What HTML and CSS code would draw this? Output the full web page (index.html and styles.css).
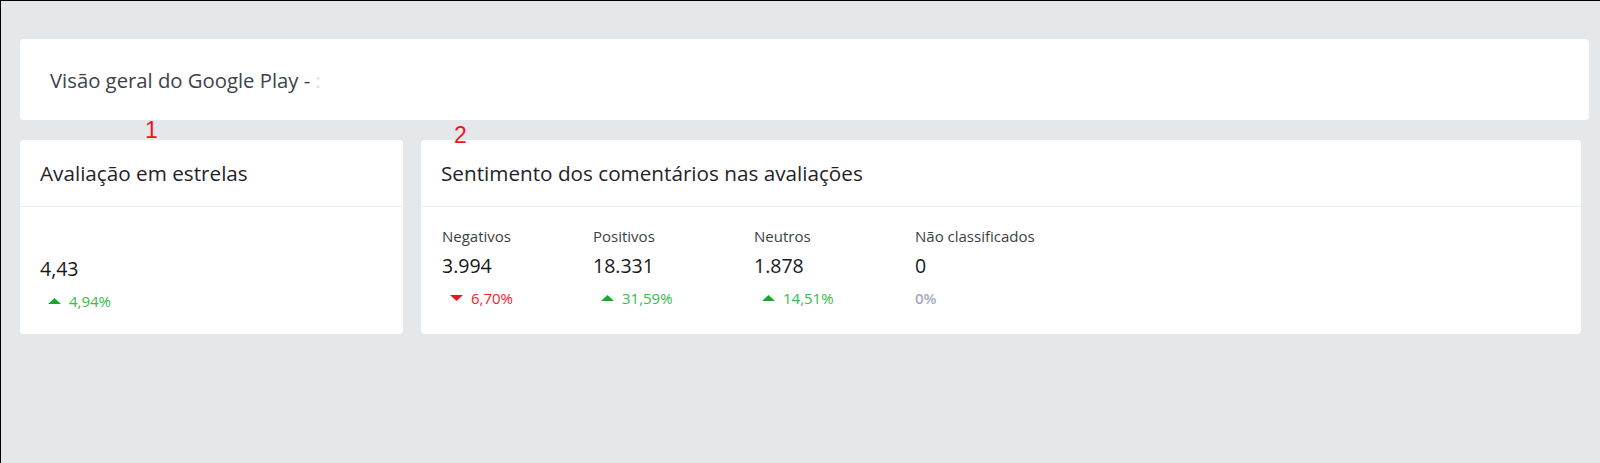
FILE: index.html
```html
<!DOCTYPE html>
<html lang="pt-BR">
<head>
    <meta charset="UTF-8">
    <meta name="viewport" content="width=device-width, initial-scale=1.0">
    <title>Visão geral do Google Play</title>
    <link rel="stylesheet" href="styles.css">
</head>
<body>

    <div class="page">
        <div class="overview">
            <h1>Visão geral do Google Play - <span class="app-name">:</span></h1>
        </div>

        <div class="cards">
            <span class="marker marker-1">1</span>
            <span class="marker marker-2">2</span>

            <div class="card card-stars">
                <div class="card-header">
                    <h2>Avaliação em estrelas</h2>
                </div>
                <div class="card-body stars-body">
                    <div class="metric">
                        <div class="metric-value">4,43</div>
                        <div class="metric-change up">
                            <svg class="arrow" width="13" height="6" viewBox="0 0 13 6"><polygon points="0,6 13,6 6.5,0"/></svg>
                            4,94%
                        </div>
                    </div>
                </div>
            </div>

            <div class="card card-sentiment">
                <div class="card-header">
                    <h2>Sentimento dos comentários nas avaliações</h2>
                </div>
                <div class="card-body sentiment-body">
                    <div class="metric col-neg">
                        <div class="metric-label">Negativos</div>
                        <div class="metric-value">3.994</div>
                        <div class="metric-change down">
                            <svg class="arrow" width="13" height="6" viewBox="0 0 13 6"><polygon points="0,0 13,0 6.5,6"/></svg>
                            6,70%
                        </div>
                    </div>
                    <div class="metric col-pos">
                        <div class="metric-label">Positivos</div>
                        <div class="metric-value">18.331</div>
                        <div class="metric-change up">
                            <svg class="arrow" width="13" height="6" viewBox="0 0 13 6"><polygon points="0,6 13,6 6.5,0"/></svg>
                            31,59%
                        </div>
                    </div>
                    <div class="metric col-neu">
                        <div class="metric-label">Neutros</div>
                        <div class="metric-value">1.878</div>
                        <div class="metric-change up">
                            <svg class="arrow" width="13" height="6" viewBox="0 0 13 6"><polygon points="0,6 13,6 6.5,0"/></svg>
                            14,51%
                        </div>
                    </div>
                    <div class="metric">
                        <div class="metric-label">Não classificados</div>
                        <div class="metric-value">0</div>
                        <div class="metric-change flat">0%</div>
                    </div>
                </div>
            </div>
        </div>
    </div>

</body>
</html>
```

FILE: styles.css
```css
html, body {
    margin: 0;
    height: 100%;
}

body {
    font-family: "Open Sans", "Noto Sans", Arial, sans-serif;
    background-color: #e4e8eb;
    border-top: 1px solid #000;
    border-left: 1px solid #000;
    box-sizing: border-box;
    color: #222;
}

.page {
    padding: 38px 0 0 19px;
}

.overview {
    background: #fff;
    border-radius: 4px;
    height: 81px;
    margin-right: 11px;
    padding-left: 30px;
    display: flex;
    align-items: center;
}

.overview h1 {
    margin: 0;
    font-size: 20.3px;
    font-weight: 400;
    color: #3d4249;
}

.app-name {
    color: #f3d9b0;
}

.cards {
    position: relative;
    display: flex;
    gap: 18px;
    margin-top: 20px;
    margin-right: 19px;
}

.marker {
    position: absolute;
    font-family: "Liberation Sans", Arial, sans-serif;
    font-size: 23px;
    color: #f0141e;
    line-height: 1;
}

.marker-1 {
    left: 125px;
    top: -21px;
}

.marker-2 {
    left: 434px;
    top: -16px;
}

.card {
    background: #fff;
    border-radius: 4px;
    height: 194px;
    display: flex;
    flex-direction: column;
}

.card-stars {
    width: 383px;
}

.card-sentiment {
    flex: 1;
}

.card-header {
    height: 66px;
    border-bottom: 1px solid #ebedef;
    padding-left: 20px;
    display: flex;
    align-items: center;
}

.card-header h2 {
    margin: 0;
    font-size: 20.7px;
    font-weight: 400;
    color: #1f2329;
}

.card-body {
    padding-left: 20px;
}

.stars-body {
    padding-top: 49px;
}

.sentiment-body {
    display: flex;
    padding-top: 19px;
    padding-left: 21px;
}

.col-neg {
    width: 151px;
}

.col-pos,
.col-neu {
    width: 161px;
}

.metric-label {
    font-size: 15px;
    color: #3a3f45;
    line-height: 20px;
    margin-bottom: 7px;
}

.metric-value {
    font-size: 19.5px;
    color: #15181c;
    line-height: 26px;
}

.metric-change {
    font-size: 15px;
    line-height: 20px;
    margin-top: 9px;
    display: flex;
    align-items: center;
    padding-left: 8px;
}

.metric-change .arrow {
    margin-right: 8px;
}

.up {
    color: #38b94a;
}

.up .arrow {
    fill: #16a82a;
}

.down {
    color: #f5222d;
}

.down .arrow {
    fill: #f0131e;
}

.flat {
    color: #a5a9bd;
    padding-left: 0;
    font-weight: 600;
}
```
